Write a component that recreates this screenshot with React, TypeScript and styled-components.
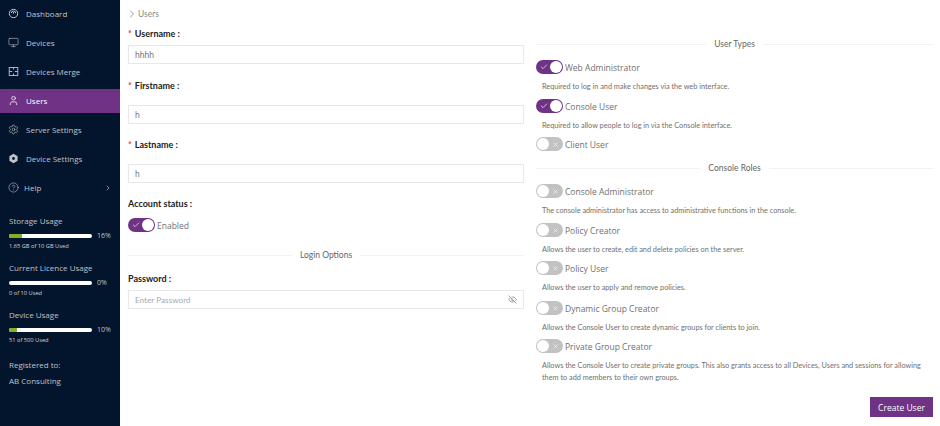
import React from "react";
import styled, { createGlobalStyle } from "styled-components";
import {
  Monitor,
  User,
  Settings,
  CircleHelp,
  ChevronRight,
  Check,
  X,
  EyeOff,
} from "lucide-react";

const GlobalStyle = createGlobalStyle`
  html, body {
    margin: 0;
    padding: 0;
    background: #fff;
  }
  * {
    box-sizing: border-box;
  }
`;

const Shell = styled.div`
  display: flex;
  width: 940px;
  height: 426px;
  overflow: hidden;
  font-family: "Open Sans", "Liberation Sans", sans-serif;
`;

const Sidebar = styled.aside`
  width: 120px;
  flex: none;
  background: #03152c;
  color: #bfc4cc;
  display: flex;
  flex-direction: column;
`;

const Nav = styled.nav`
  display: flex;
  flex-direction: column;
  gap: 5px;
  padding-top: 2px;
`;

const NavItem = styled.div<{ $active?: boolean; $tight?: boolean }>`
  height: 24px;
  display: flex;
  align-items: center;
  gap: ${(p) => (p.$tight ? 5 : 7)}px;
  padding: 0 9px 1px 8px;
  font-size: 8px;
  background: ${(p) => (p.$active ? "#6f3285" : "transparent")};
  color: ${(p) => (p.$active ? "#fff" : "#bfc4cc")};
`;

const NavArrow = styled.span`
  margin-left: auto;
  display: flex;
  margin-right: -1px;
`;

const Usage = styled.div`
  padding: 15px 9px 0;
  display: flex;
  flex-direction: column;
  gap: 12px;
`;

const UsageBlock = styled.div`
  display: flex;
  flex-direction: column;
`;

const UsageTitle = styled.div`
  font-size: 8px;
  line-height: 12px;
`;

const BarRow = styled.div`
  display: flex;
  align-items: center;
  gap: 5px;
  margin-top: 4px;
  height: 9px;
  font-size: 7px;
`;

const Bar = styled.div`
  width: 83px;
  height: 4px;
  background: #fff;
  border-radius: 2px;
  overflow: hidden;
`;

const BarFill = styled.div`
  height: 100%;
  background: #7fb02c;
`;

const UsageNote = styled.div`
  font-size: 5.7px;
  line-height: 8px;
  margin-top: 2px;
  color: #d5d8dd;
`;

const Registered = styled.div`
  font-size: 8px;
  line-height: 12px;
  margin-top: 3px;
  display: flex;
  flex-direction: column;
  gap: 4px;
`;

const Main = styled.main`
  flex: 1;
  padding: 0 7px 0 8px;
  display: grid;
  grid-template-columns: 396px 397px;
  column-gap: 12px;
  color: #555;
  font-family: "Lato", "Open Sans", sans-serif;
`;

const Column = styled.div`
  display: flex;
  flex-direction: column;
`;

const Breadcrumb = styled.div`
  height: 28px;
  display: flex;
  align-items: center;
  margin-left: -2px;
  font-size: 8.5px;
  color: #8a8a8a;
  svg {
    color: #555;
  }
`;

const FieldLabel = styled.div<{ $gap: number }>`
  font-size: 9px;
  font-weight: 700;
  line-height: 12px;
  color: #222;
  margin-bottom: ${(p) => p.$gap}px;
`;

const Required = styled.span`
  color: #e8394a;
  margin-right: 3px;
`;

const InputBox = styled.div<{ $after: number }>`
  height: 19px;
  border: 1px solid #e8e8e8;
  display: flex;
  align-items: center;
  justify-content: space-between;
  padding: 0 6px;
  font-size: 8.5px;
  color: #777;
  margin-bottom: ${(p) => p.$after}px;
`;

const Placeholder = styled.span`
  font-size: 8.2px;
  color: #aaa;
`;

const Track = styled.div<{ $on?: boolean }>`
  width: 27px;
  height: 14px;
  flex: none;
  border-radius: 7px;
  background: ${(p) => (p.$on ? "#6f3285" : "#c2c2c2")};
  position: relative;
  display: flex;
  align-items: center;
  justify-content: ${(p) => (p.$on ? "flex-start" : "flex-end")};
  padding: 0 4px;
  color: #fff;
`;

const Knob = styled.div<{ $on?: boolean }>`
  position: absolute;
  top: 1px;
  left: ${(p) => (p.$on ? "14px" : "1px")};
  width: 12px;
  height: 12px;
  border-radius: 50%;
  background: #fff;
`;

const SwitchRow = styled.div`
  display: flex;
  align-items: center;
  gap: 2px;
  height: 14px;
  font-family: "Open Sans", sans-serif;
  font-size: 8.5px;
  color: #707070;
`;

const Divider = styled.div<{ $top: number; $bottom: number }>`
  display: flex;
  align-items: center;
  gap: 8px;
  height: 12px;
  font-size: 8.5px;
  color: #666;
  margin: ${(p) => p.$top}px 0 ${(p) => p.$bottom}px;
  &::before,
  &::after {
    content: "";
    flex: 1;
    height: 1px;
    background: #f2f2f2;
  }
`;

const Hint = styled.div<{ $after: number }>`
  font-size: 7.3px;
  line-height: 12px;
  color: #707070;
  padding-left: 6px;
  margin: 7px 0 ${(p) => p.$after}px;
`;

const Actions = styled.div`
  display: flex;
  justify-content: flex-end;
  margin-top: 13px;
`;

const CreateButton = styled.button`
  width: 63px;
  height: 20px;
  border: none;
  padding: 0;
  background: #6f3285;
  color: #fff;
  font-family: "Open Sans", sans-serif;
  font-size: 8.5px;
`;

const Switch = ({ on }: { on?: boolean }) => (
  <Track $on={on}>
    {on ? <Check size={8} strokeWidth={2} /> : <X size={7} strokeWidth={2} />}
    <Knob $on={on} />
  </Track>
);

const DashboardIcon = () => (
  <svg width="11" height="11" viewBox="0 0 11 11" fill="none" stroke="currentColor" strokeWidth="1">
    <circle cx="5.5" cy="5.5" r="4.2" />
    <path d="M3.3 5.2a2.2 2.2 0 0 1 4.4 0" />
    <path d="M5.5 5.5V4" />
  </svg>
);

const MergeIcon = () => (
  <svg width="11" height="11" viewBox="0 0 11 11" fill="none" stroke="currentColor" strokeWidth="0.9">
    <rect x="1.2" y="1.5" width="8.6" height="8" />
    <path d="M5.5 1.5v2M5.5 7.5v2M1.2 5.5h3M6.8 5.5h3" />
  </svg>
);

const DeviceSettingsIcon = () => (
  <svg width="11" height="11" viewBox="0 0 11 11" fill="currentColor">
    <path d="M5.5.8 9.6 3.2v4.6L5.5 10.2 1.4 7.8V3.2Z" />
    <circle cx="5.5" cy="5.5" r="1.4" fill="#03152c" />
  </svg>
);

const navItems = [
  { label: "Dashboard", icon: <DashboardIcon /> },
  { label: "Devices", icon: <Monitor size={11} strokeWidth={1.3} /> },
  { label: "Devices Merge", icon: <MergeIcon /> },
  { label: "Users", icon: <User size={11} strokeWidth={1.6} />, active: true },
  { label: "Server Settings", icon: <Settings size={11} strokeWidth={1.3} /> },
  { label: "Device Settings", icon: <DeviceSettingsIcon /> },
  { label: "Help", icon: <CircleHelp size={11} strokeWidth={1.3} />, arrow: true },
];

const usage = [
  { title: "Storage Usage", pct: 16, note: "1.65 GB of 10 GB Used" },
  { title: "Current Licence Usage", pct: 0, note: "0 of 10 Used" },
  { title: "Device Usage", pct: 10, note: "51 of 500 Used" },
];

const App = () => {
  return (
    <Shell>
      <GlobalStyle />
      <Sidebar>
        <Nav>
          {navItems.map((item) => (
            <NavItem key={item.label} $active={item.active} $tight={item.arrow}>
              {item.icon}
              {item.label}
              {item.arrow && (
                <NavArrow>
                  <ChevronRight size={8} />
                </NavArrow>
              )}
            </NavItem>
          ))}
        </Nav>
        <Usage>
          {usage.map((u) => (
            <UsageBlock key={u.title}>
              <UsageTitle>{u.title}</UsageTitle>
              <BarRow>
                <Bar>
                  <BarFill style={{ width: `${u.pct}%` }} />
                </Bar>
                {u.pct}%
              </BarRow>
              <UsageNote>{u.note}</UsageNote>
            </UsageBlock>
          ))}
          <Registered>
            <div>Registered to:</div>
            <div>AB Consulting</div>
          </Registered>
        </Usage>
      </Sidebar>
      <Main>
        <Column>
          <Breadcrumb>
            <ChevronRight size={12} strokeWidth={1.2} />
            Users
          </Breadcrumb>
          <FieldLabel $gap={5}>
            <Required>*</Required>Username :
          </FieldLabel>
          <InputBox $after={16}>hhhh</InputBox>
          <FieldLabel $gap={13}>
            <Required>*</Required>Firstname :
          </FieldLabel>
          <InputBox $after={15}>h</InputBox>
          <FieldLabel $gap={13}>
            <Required>*</Required>Lastname :
          </FieldLabel>
          <InputBox $after={15}>h</InputBox>
          <FieldLabel $gap={8}>Account status :</FieldLabel>
          <SwitchRow>
            <Switch on />
            Enabled
          </SwitchRow>
          <Divider $top={17} $bottom={12}>
            Login Options
          </Divider>
          <FieldLabel $gap={5}>Password :</FieldLabel>
          <InputBox $after={0}>
            <Placeholder>Enter Password</Placeholder>
            <EyeOff size={9} color="#888" />
          </InputBox>
        </Column>
        <Column>
          <Divider $top={38} $bottom={10}>
            User Types
          </Divider>
          <SwitchRow>
            <Switch on />
            Web Administrator
          </SwitchRow>
          <Hint $after={6}>Required to log in and make changes via the web interface.</Hint>
          <SwitchRow>
            <Switch on />
            Console User
          </SwitchRow>
          <Hint $after={5}>Required to allow people to log in via the Console interface.</Hint>
          <SwitchRow>
            <Switch />
            Client User
          </SwitchRow>
          <Divider $top={11} $bottom={10}>
            Console Roles
          </Divider>
          <SwitchRow>
            <Switch />
            Console Administrator
          </SwitchRow>
          <Hint $after={6}>The console administrator has access to administrative functions in the console.</Hint>
          <SwitchRow>
            <Switch />
            Policy Creator
          </SwitchRow>
          <Hint $after={5}>Allows the user to create, edit and delete policies on the server.</Hint>
          <SwitchRow>
            <Switch />
            Policy User
          </SwitchRow>
          <Hint $after={7}>Allows the user to apply and remove policies.</Hint>
          <SwitchRow>
            <Switch />
            Dynamic Group Creator
          </SwitchRow>
          <Hint $after={5}>Allows the Console User to create dynamic groups for clients to join.</Hint>
          <SwitchRow>
            <Switch />
            Private Group Creator
          </SwitchRow>
          <Hint $after={0}>
            Allows the Console User to create private groups. This also grants access to all Devices, Users and sessions for allowing them to add members to their own groups.
          </Hint>
          <Actions>
            <CreateButton>Create User</CreateButton>
          </Actions>
        </Column>
      </Main>
    </Shell>
  );
};

export default App;
